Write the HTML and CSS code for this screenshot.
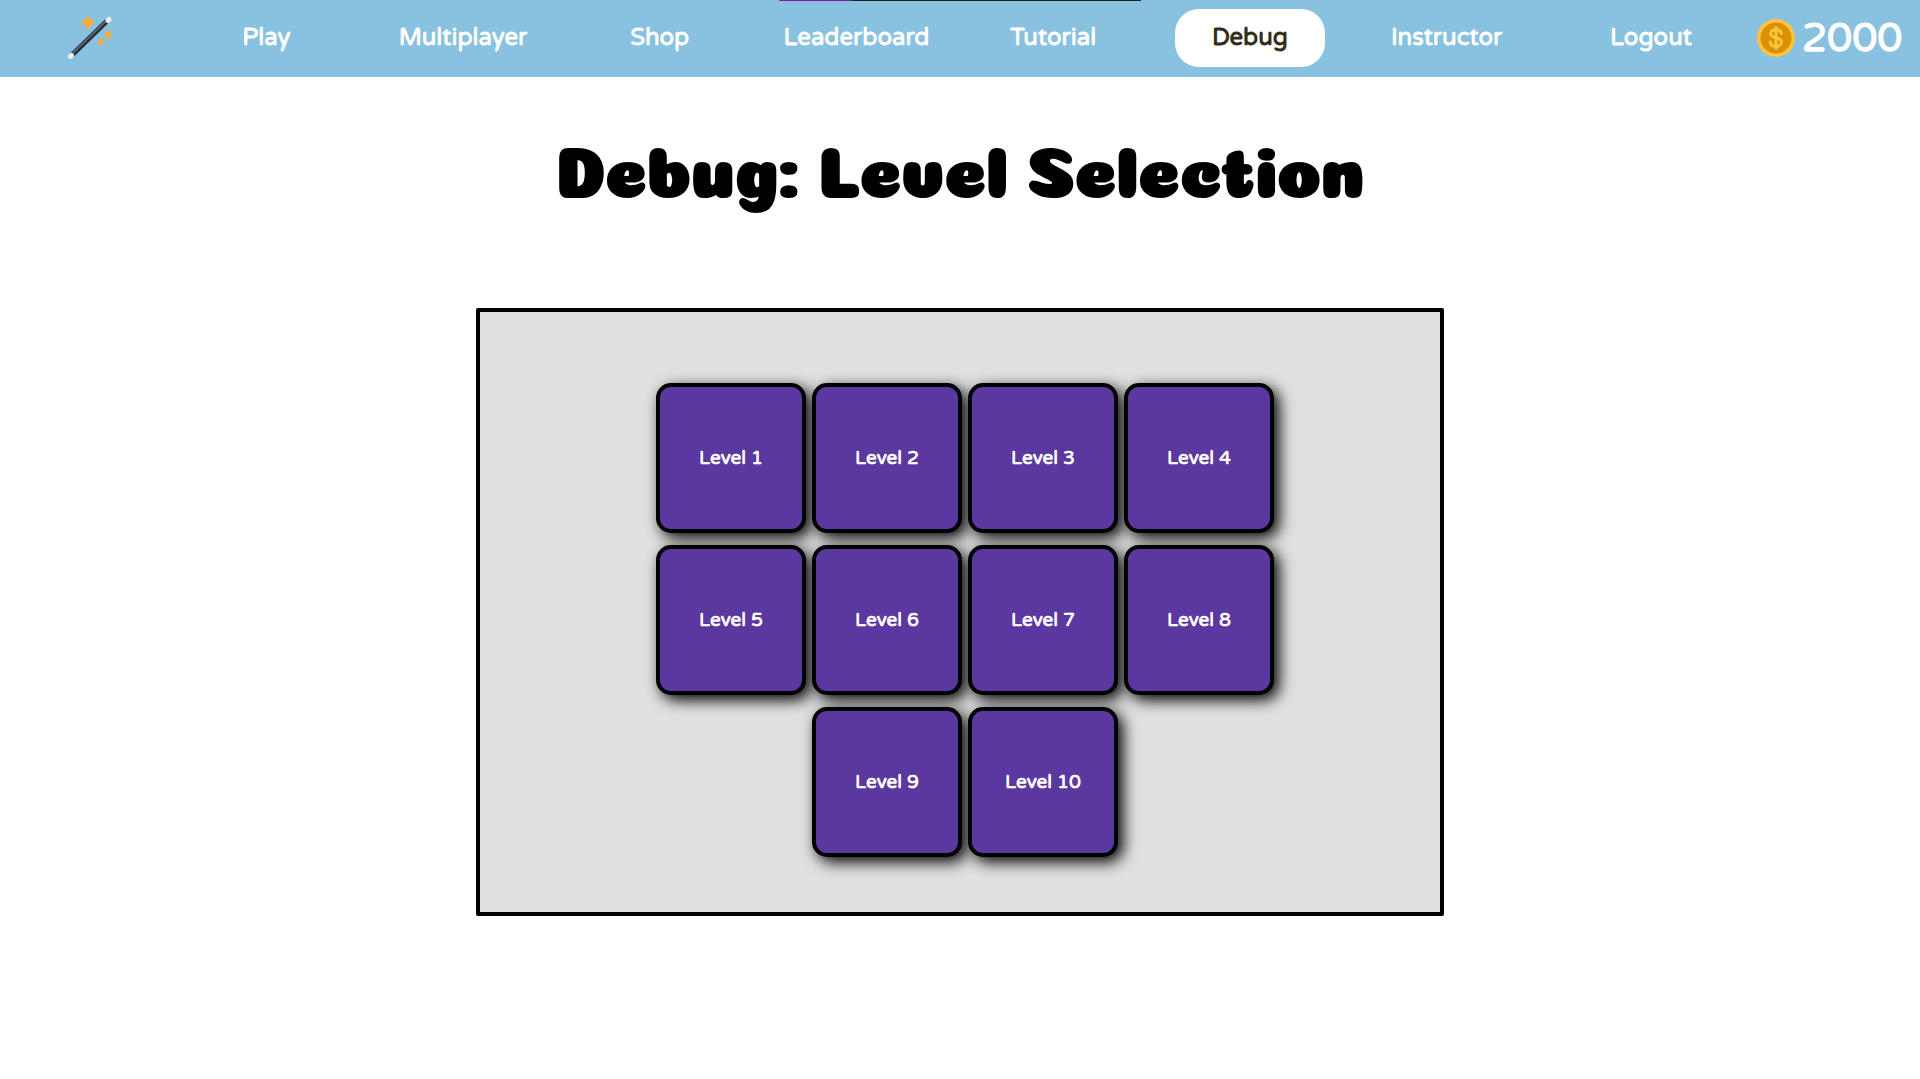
FILE: index.html
```html
<!DOCTYPE html>
<html lang="en">
<head>
<meta charset="utf-8">
<title>Debug: Level Selection</title>
<link rel="stylesheet" href="styles.css">
</head>
<body>
<div class="share-strip"></div>
<header class="topbar">
  <a class="logo" href="#" aria-label="Home">
    <svg width="46" height="46" viewBox="0 0 46 46" aria-hidden="true">
      <path d="M5 40 40 6" stroke="#292f33" stroke-width="5"/>
      <path d="M5 39 39 6" stroke="#66757f" stroke-width="1.500"/>
      <path d="M3.500 41.500 4.500 40.500M41 5.500 42 4.500" stroke="#e9eef2" stroke-width="5" stroke-linecap="round"/>
      <path fill="#ffac33" d="M21 1q1 5.500 6.500 6.500Q22 8.500 21 14q-1-5.500-6.500-6.500Q20 6.500 21 1zM41 15q.7 4 3.500 4.500Q41.700 20 41 24q-.7-4-3.500-4.500Q40.300 19 41 15zM34 24q.6 2.500 3 3-2.400.5-3 3-.6-2.500-3-3 2.400-.5 3-3z" stroke="#ffac33" stroke-width="1.500" stroke-linejoin="round"/>
    </svg>
  </a>
  <nav class="menu">
    <a class="menu-link" href="#">Play</a>
    <a class="menu-link" href="#">Multiplayer</a>
    <a class="menu-link" href="#">Shop</a>
    <a class="menu-link" href="#">Leaderboard</a>
    <a class="menu-link" href="#">Tutorial</a>
    <a class="menu-link active" href="#" aria-current="page">Debug</a>
    <a class="menu-link" href="#">Instructor</a>
  </nav>
  <a class="logout" href="#">Logout</a>
  <div class="coins">
    <svg width="38" height="38" viewBox="0 0 38 38" aria-hidden="true">
      <circle cx="19" cy="19" r="19" fill="#ffc43d"/>
      <circle cx="19" cy="19" r="15.500" fill="#d99100"/>
      <path d="M24.500 14.500c-.5-2.500-3-3.800-5.500-3.800-3.200 0-5.500 1.500-5.500 3.800 0 5.500 11 3 11 8.500 0 2.600-2.300 4.300-5.500 4.300-3.200 0-5.500-1.500-5.700-4.200M19 8.500v21" fill="none" stroke="#ffc43d" stroke-width="3" stroke-linecap="round"/>
    </svg>
    <span>2000</span>
  </div>
</header>
<main class="page">
  <h1 class="title">Debug: Level Selection</h1>
  <section class="panel" aria-label="Levels">
    <button class="level" type="button">Level 1</button>
    <button class="level" type="button">Level 2</button>
    <button class="level" type="button">Level 3</button>
    <button class="level" type="button">Level 4</button>
    <button class="level" type="button">Level 5</button>
    <button class="level" type="button">Level 6</button>
    <button class="level" type="button">Level 7</button>
    <button class="level" type="button">Level 8</button>
    <button class="level" type="button">Level 9</button>
    <button class="level" type="button">Level 10</button>
  </section>
</main>
</body>
</html>
```
FILE: styles.css
```css
* {
  box-sizing: border-box;
}

body {
  margin: 0;
  background: #fff;
  font-family: "Varela Round", "Open Sans", sans-serif;
}

/* Thin bar pinned to the top edge of the window */
.share-strip {
  position: absolute;
  top: 0;
  left: 50%;
  width: 362px;
  height: 1px;
  margin-left: -181px;
  background: linear-gradient(to right, #8a1a9b 72px, #222 72px);
}

.topbar {
  display: flex;
  align-items: center;
  height: 77px;
  padding-bottom: 1px;
  background: #89c1e0;
  color: #fff;
  font-size: 24px;
  font-weight: 700;
}

.topbar a {
  color: #fff;
  text-decoration: none;
}

.logo {
  width: 168px;
  padding-left: 67px;
}

.logo svg {
  display: block;
}

.menu {
  flex: 1;
  display: grid;
  grid-template-columns: repeat(7, 1fr);
  justify-items: center;
}

.menu-link {
  min-width: 150px;
  line-height: 58px;
  border-radius: 24px;
  text-align: center;
}

.topbar .active {
  background: #fff;
  color: #332e1a;
}

.logout {
  width: 212px;
  line-height: 58px;
  text-align: center;
}

.coins {
  display: flex;
  align-items: center;
  gap: 7px;
  width: 163px;
  font-size: 40px;
  line-height: 58px;
}

.page {
  display: flex;
  flex-direction: column;
  align-items: center;
}

.title {
  margin: 36px 0 96px;
  font-family: "Coiny", "Inter", sans-serif;
  font-size: 70px;
  font-weight: 700;
  line-height: 99px;
}

.panel {
  display: flex;
  flex-wrap: wrap;
  justify-content: center;
  gap: 12px 6px;
  width: calc(50% + 8px);
  padding: 71px 135px 55px 145px;
  border: 4px solid #000;
  border-radius: 2px;
  background: #e0e0e0;
}

.level {
  width: 150px;
  height: 150px;
  padding: 0;
  border: 4px solid #000;
  border-radius: 15px;
  background: #5b389f;
  box-shadow: 5px 5px 15px #000;
  color: #fff;
  font-family: inherit;
  font-size: 19px;
  font-weight: 700;
}
```
